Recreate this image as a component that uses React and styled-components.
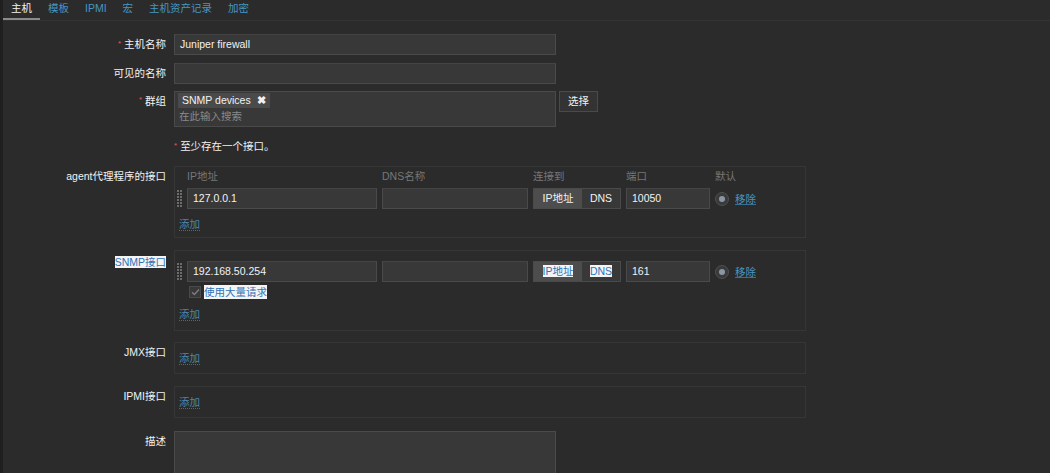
import React from 'react'
import styled, { createGlobalStyle } from 'styled-components'

const Global = createGlobalStyle`
  html, body { margin: 0; padding: 0; background: #2b2b2b; }
  body {
    font-family: "Liberation Sans", Arial, "Noto Sans CJK SC", sans-serif;
    font-size: 10.5px;
    color: #f2f2f2;
    border-left: 3px solid #1f1f1f;
    min-height: 473px;
    box-sizing: border-box;
  }
`

const Page = styled.div`
  width: 1047px;
  height: 473px;
  overflow: hidden;
`

const TabBar = styled.ul`
  display: flex;
  margin: 0;
  padding: 0;
  list-style: none;
  height: 21px;
  border-bottom: 1px solid #333;
  box-sizing: border-box;
`

const Tab = styled.li`
  padding: 0 8px;
  height: 20px;
  line-height: 17px;
  color: ${p => (p.$active ? '#f2f2f2' : '#4796c4')};
  border-bottom: 2px solid ${p => (p.$active ? '#8a8a8a' : 'transparent')};
  box-sizing: border-box;
`

const Form = styled.div`
  display: flex;
  flex-direction: column;
`

const Row = styled.div`
  display: grid;
  grid-template-columns: 163px 1fr;
  column-gap: 8px;
  margin-top: ${p => p.$mt || 8}px;
`

const Label = styled.div`
  text-align: right;
  line-height: ${p => p.$lh || 21}px;
  padding-top: ${p => p.$pt || 0}px;
  white-space: nowrap;
`

const Req = styled.span`
  color: #e45959;
  font-size: 8px;
  vertical-align: top;
  margin-right: 3px;
  position: relative;
  top: -1px;
`

const Sel = styled.span`
  background: #f4f4f4;
  color: #2f73b8;
`

const Field = styled.div`
  display: flex;
  align-items: flex-start;
  gap: 3px;
`

const TextInput = styled.div`
  width: ${p => p.$w || 382}px;
  height: ${p => p.$h || 21}px;
  box-sizing: border-box;
  background: #383838;
  border: 1px solid #4a4a4a;
  border-top-color: #444;
  padding: 0 5px;
  line-height: 19px;
  color: #f2f2f2;
  white-space: nowrap;
`

const Multi = styled.div`
  width: 382px;
  height: 36px;
  box-sizing: border-box;
  background: #383838;
  border: 1px solid #4a4a4a;
  padding: 1px 3px;
`

const Chip = styled.span`
  display: inline-flex;
  align-items: center;
  gap: 6px;
  height: 15px;
  padding: 0 4px;
  background: #4a4a4a;
  line-height: 15px;
`

const ChipX = styled.span`
  font-weight: bold;
  font-size: 11px;
`

const Placeholder = styled.div`
  color: #8a8a8a;
  line-height: 16px;
  padding-left: 1px;
`

const Button = styled.div`
  width: 39px;
  height: 21px;
  box-sizing: border-box;
  border: 1px solid #4a4a4a;
  background: #333;
  text-align: center;
  line-height: 19px;
`

const Note = styled.div`
  line-height: 15px;
`

const Box = styled.div`
  width: 632px;
  box-sizing: border-box;
  border: 1px solid #363636;
  padding: ${p => p.$pad || '6px 0 6px 2px'};
`

const IfGrid = styled.div`
  display: grid;
  grid-template-columns: 5px 190px 146px 88px 84px 14px auto;
  column-gap: 5px;
  align-items: center;
  margin-top: ${p => p.$mt || 0}px;
`

const Head = styled.div`
  color: #777;
  line-height: 18px;
`

const Handle = styled.svg`
  display: block;
`

const Toggle = styled.div`
  display: flex;
  height: 21px;
  box-sizing: border-box;
  border: 1px solid #4a4a4a;
`

const Seg = styled.div`
  width: ${p => p.$w}px;
  background: ${p => (p.$on ? '#4d4d4d' : '#383838')};
  text-align: center;
  line-height: 19px;
`

const Radio = styled.div`
  width: 12px;
  height: 12px;
  border-radius: 50%;
  background: #3a3a3a;
  border: 1px solid #4f4f4f;
  display: flex;
  align-items: center;
  justify-content: center;
  &::after {
    content: '';
    width: 6px;
    height: 6px;
    border-radius: 50%;
    background: #8b97a3;
  }
`

const Remove = styled.span`
  color: #4796c4;
  text-decoration: underline;
  text-decoration-color: #3b6f93;
  margin-left: 1px;
`

const AddLink = styled.div`
  color: #4a87ad;
  line-height: 18px;
  margin-top: ${p => p.$mt || 0}px;
  padding-left: ${p => p.$pl || 2}px;
  span { border-bottom: 1px dotted #3f6f8f; }
`

const CheckRow = styled.div`
  display: flex;
  align-items: center;
  gap: 3px;
  margin-top: 3px;
  padding-left: 12px;
  line-height: 14px;
`

const Check = styled.div`
  width: 12px;
  height: 12px;
  box-sizing: border-box;
  background: #383838;
  border: 1px solid #4a4a4a;
  display: flex;
  align-items: center;
  justify-content: center;
`

const TextArea = styled.div`
  width: 382px;
  height: 60px;
  box-sizing: border-box;
  background: #383838;
  border: 1px solid #4a4a4a;
`

function DragHandle() {
  const dots = []
  for (let r = 0; r < 6; r++) {
    for (let c = 0; c < 2; c++) {
      dots.push(<rect key={r + '-' + c} x={c * 3} y={r * 3} width="2" height="2" fill="#6c6c6c" />)
    }
  }
  return (
    <Handle width="5" height="17" viewBox="0 0 5 17">
      {dots}
    </Handle>
  )
}

function IfaceRow({ ip, port, sel, mt }) {
  return (
    <IfGrid $mt={mt}>
      <DragHandle />
      <TextInput $w={190}>{ip}</TextInput>
      <TextInput $w={146} />
      <Toggle>
        <Seg $w={48} $on>{sel ? <Sel>IP地址</Sel> : 'IP地址'}</Seg>
        <Seg $w={38}>{sel ? <Sel>DNS</Sel> : 'DNS'}</Seg>
      </Toggle>
      <TextInput $w={84}>{port}</TextInput>
      <Radio />
      <Remove>移除</Remove>
    </IfGrid>
  )
}

export default function App() {
  return (
    <Page>
      <Global />
      <TabBar>
        <Tab $active>主机</Tab>
        <Tab>模板</Tab>
        <Tab>IPMI</Tab>
        <Tab>宏</Tab>
        <Tab>主机资产记录</Tab>
        <Tab>加密</Tab>
      </TabBar>

      <Form>
        <Row $mt={13}>
          <Label><Req>*</Req>主机名称</Label>
          <TextInput>Juniper firewall</TextInput>
        </Row>
        <Row $mt={8}>
          <Label>可见的名称</Label>
          <TextInput />
        </Row>
        <Row $mt={7}>
          <Label $lh={20}><Req>*</Req>群组</Label>
          <Field>
            <Multi>
              <Chip>SNMP devices <ChipX>✖</ChipX></Chip>
              <Placeholder>在此输入搜索</Placeholder>
            </Multi>
            <Button>选择</Button>
          </Field>
        </Row>
        <Row $mt={12}>
          <Label />
          <Note><Req>*</Req>至少存在一个接口。</Note>
        </Row>

        <Row $mt={12}>
          <Label $lh={14} $pt={3}>agent代理程序的接口</Label>
          <Box $pad="0 0 4px 2px">
            <IfGrid>
              <span />
              <Head>IP地址</Head>
              <Head>DNS名称</Head>
              <Head>连接到</Head>
              <Head>端口</Head>
              <Head style={{ gridColumn: 'span 2' }}>默认</Head>
            </IfGrid>
            <IfaceRow ip="127.0.0.1" port="10050" mt={3} />
            <AddLink $mt={6}><span>添加</span></AddLink>
          </Box>
        </Row>

        <Row $mt={12}>
          <Label $lh={14} $pt={5}><Sel>SNMP接口</Sel></Label>
          <Box $pad="10px 0 7px 2px">
            <IfaceRow ip="192.168.50.254" port="161" sel />
            <CheckRow>
              <Check>
                <svg width="9" height="8" viewBox="0 0 9 8">
                  <path d="M1 4.2 L3.4 6.5 L8 1.5" stroke="#7d7d7d" strokeWidth="1.4" fill="none" />
                </svg>
              </Check>
              <Sel>使用大量请求</Sel>
            </CheckRow>
            <AddLink $mt={6}><span>添加</span></AddLink>
          </Box>
        </Row>

        <Row $mt={11}>
          <Label $lh={14} $pt={3}>JMX接口</Label>
          <Box $pad="6px 0 6px 2px">
            <AddLink><span>添加</span></AddLink>
          </Box>
        </Row>

        <Row $mt={12}>
          <Label $lh={14} $pt={3}>IPMI接口</Label>
          <Box $pad="6px 0 6px 2px">
            <AddLink><span>添加</span></AddLink>
          </Box>
        </Row>

        <Row $mt={13}>
          <Label $lh={14} $pt={3}>描述</Label>
          <TextArea />
        </Row>
      </Form>
    </Page>
  )
}
